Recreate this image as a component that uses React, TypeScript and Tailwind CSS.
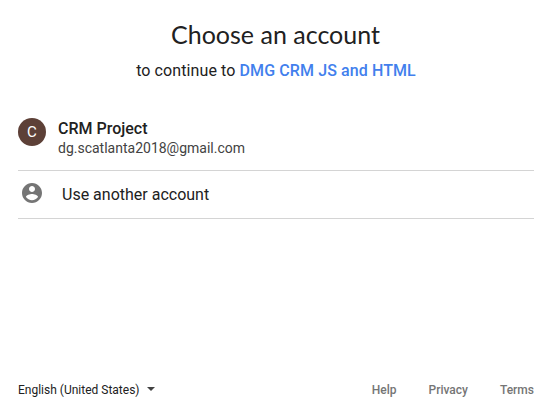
export default function App() {
  return (
    <main className="flex h-[410px] w-[554px] flex-col bg-white pr-5 pl-[18px] font-['Roboto',sans-serif] text-[#212121]">
      <header className="flex flex-col items-center pt-[18px]">
        <h1 className="h-8 pr-px font-['Lato',sans-serif] text-[25px] leading-8 whitespace-nowrap">Choose an account</h1>
        <p className="mt-[9px] h-6 text-base leading-6 tracking-[0.1px] whitespace-nowrap">
          to continue to <a className="font-medium text-[#427fed]">DMG CRM JS and HTML</a>
        </p>
      </header>
      <ul className="mt-[23px]">
        <li className="flex h-[65px] items-start border-b border-[#d4d4d4] pt-[12px]">
          <span className="flex size-7 items-center justify-center rounded-full bg-[#5d4037] pt-px text-[15px] text-white">C</span>
          <div className="ml-3 pt-px">
            <p className="text-base leading-5 font-medium">CRM Project</p>
            <p className="text-sm leading-[19px] text-[#424242]">dg.scatlanta2018@gmail.com</p>
          </div>
        </li>
        <li className="flex h-12 items-center border-b border-[#d4d4d4]">
          <svg className="mb-[3px] ml-0.5 size-6" viewBox="0 0 24 24" fill="#757575">
            <path d="M12 2C6.48 2 2 6.48 2 12s4.48 10 10 10 10-4.48 10-10S17.52 2 12 2zm0 3c1.66 0 3 1.34 3 3s-1.34 3-3 3-3-1.34-3-3 1.34-3 3-3zm0 14.2c-2.5 0-4.71-1.28-6-3.22.03-1.99 4-3.08 6-3.08 1.99 0 5.97 1.09 6 3.08-1.29 1.94-3.5 3.22-6 3.22z" />
          </svg>
          <span className="ml-[18px] text-base">Use another account</span>
        </li>
      </ul>
      <footer className="mt-auto mb-3 flex h-4 items-center justify-between text-xs">
        <button className="flex items-center gap-[7px]">English (United States)<span className="mb-0.5 border-x-4 border-t-4 border-x-transparent border-t-[#424242]" /></button>
        <nav className="flex gap-8 font-medium text-[#757575]"><a>Help</a><a>Privacy</a><a>Terms</a></nav>
      </footer>
    </main>
  );
}
